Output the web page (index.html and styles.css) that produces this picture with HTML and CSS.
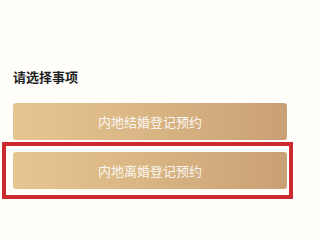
FILE: index.html
```html
<!DOCTYPE html>
<html lang="zh">
<head>
<meta charset="utf-8">
<link rel="stylesheet" href="styles.css">
</head>
<body>
<div class="page">
  <div class="title">请选择事项</div>
  <div class="btn">内地结婚登记预约</div>
  <div class="selected">
    <div class="btn">内地离婚登记预约</div>
  </div>
</div>
</body>
</html>
```
FILE: styles.css
```css
html, body {
  margin: 0;
  padding: 0;
  background: #fffefb;
  width: 300px;
  height: 200px;
  overflow: hidden;
}
.page {
  padding: 69px 13px 0 13px;
  font-family: "Noto Sans CJK SC", "Noto Sans", sans-serif;
}
.title {
  font-size: 13px;
  line-height: 16px;
  font-weight: 700;
  color: #1e1e1e;
}
.btn {
  height: 37px;
  border-radius: 3px;
  background: linear-gradient(90deg, #e6c690 0%, #d9b583 50%, #c9a074 100%);
  color: rgba(255, 255, 255, 0.92);
  font-size: 13px;
  display: flex;
  align-items: center;
  justify-content: center;
}
.title + .btn {
  margin-top: 18px;
}
.selected {
  margin: 2px 0 0 -11px;
  width: 274px;
  border: 4px solid #cc2a2f;
  padding: 6px 2px 6px 7px;
}
```
